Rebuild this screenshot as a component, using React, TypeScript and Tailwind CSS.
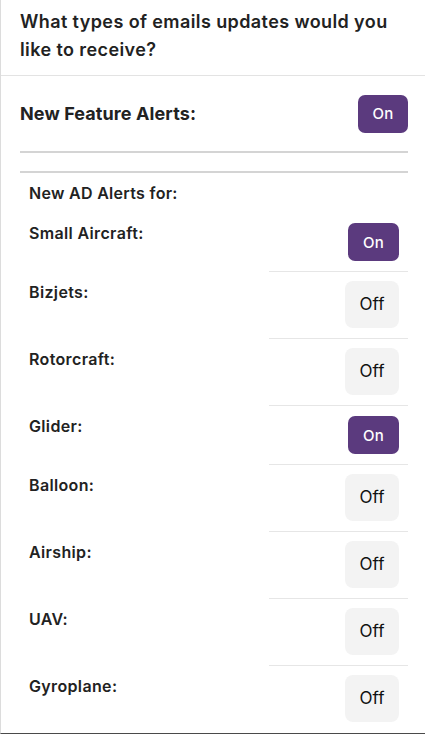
import React from 'react'

type Row = { label: string; on: boolean }

const rows: Row[] = [
  { label: 'Small Aircraft:', on: true },
  { label: 'Bizjets:', on: false },
  { label: 'Rotorcraft:', on: false },
  { label: 'Glider:', on: true },
  { label: 'Balloon:', on: false },
  { label: 'Airship:', on: false },
  { label: 'UAV:', on: false },
  { label: 'Gyroplane:', on: false },
]

function Toggle({ on }: { on: boolean }) {
  if (on) {
    return (
      <button className="w-[51px] h-[38px] rounded-[7px] bg-[#5b3a7e] text-white text-[15px] font-medium leading-none tracking-[0.3px]">
        On
      </button>
    )
  }
  return (
    <button className="w-[54px] h-[47px] rounded-[8px] bg-[#f3f3f3] text-[#111] text-[17px] leading-none">
      Off
    </button>
  )
}

export default function App() {
  return (
    <div
      className="w-[425px] h-[734px] bg-white border-l border-l-[#dcdcdc] border-b border-b-[#4a4a4a] overflow-hidden text-[#222]"
      style={{ fontFamily: 'Inter, "Noto Sans", sans-serif' }}
    >
      {/* Titulo */}
      <div className="pl-[19px] pr-[16px] pt-[8px] pb-[11px] border-b border-[#e3e3e3]">
        <h2 className="text-[18px] leading-[28px] font-semibold tracking-[0.4px]">
          What types of emails updates would you like to receive?
        </h2>
      </div>

      <div className="pl-[19px] pr-[17px]">
        <div className="flex items-center justify-between h-[75px]">
          <span className="text-[18px] font-bold tracking-[0.1px]">New Feature Alerts:</span>
          <button className="w-[50px] h-[38px] rounded-[7px] bg-[#5b3a7e] text-white text-[15px] font-medium leading-none tracking-[0.3px]">
            On
          </button>
        </div>
        <div className="h-[2px] bg-[#d4d4d4]" />
        <div className="h-[18px]" />
        <div className="h-[2px] bg-[#d4d4d4]" />

        {/* AD alerts */}
        <div className="pl-[9px]">
          <div className="h-[40px] flex items-center text-[16px] font-semibold tracking-[0.3px]">New AD Alerts for:</div>
          {rows.map((r, i) => (
            <div key={r.label} className="flex">
              <div className="flex-1 pt-[9px] text-[16px] leading-[22px] font-semibold tracking-[0.35px]">{r.label}</div>
              <div
                className={
                  'w-[139px] flex justify-end pr-[9px] pb-[10px] ' +
                  (r.on ? 'pt-[10px] ' : 'pt-[9px] ') +
                  (i < rows.length - 1 ? 'border-b border-[#e6e6e6]' : '')
                }
              >
                <Toggle on={r.on} />
              </div>
            </div>
          ))}
        </div>
      </div>
    </div>
  )
}
